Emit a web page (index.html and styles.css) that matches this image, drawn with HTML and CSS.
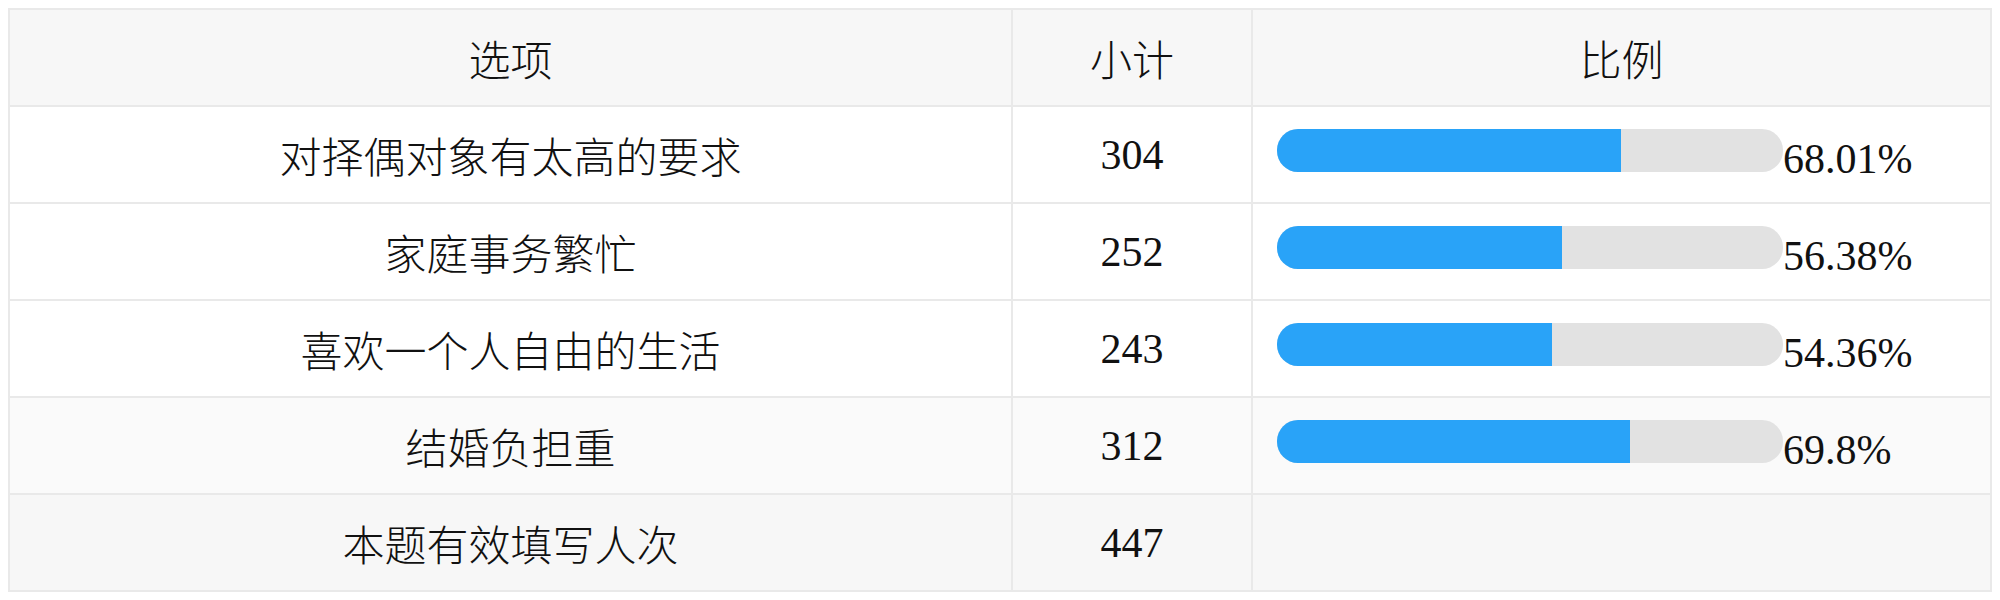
FILE: index.html
```html
<!DOCTYPE html>
<html lang="zh-CN">
<head>
<meta charset="utf-8">
<title>统计表</title>
<link rel="stylesheet" href="styles.css">
</head>
<body>
<table class="stats">
  <colgroup>
    <col class="col-option">
    <col class="col-count">
    <col class="col-ratio">
  </colgroup>
  <thead>
    <tr class="head-row">
      <th>选项</th>
      <th>小计</th>
      <th>比例</th>
    </tr>
  </thead>
  <tbody>
    <tr>
      <td>对择偶对象有太高的要求</td>
      <td>304</td>
      <td class="ratio-cell"><div class="ratio"><div class="bar"><div class="fill" style="width:68.01%"></div></div><span class="pct">68.01%</span></div></td>
    </tr>
    <tr>
      <td>家庭事务繁忙</td>
      <td>252</td>
      <td class="ratio-cell"><div class="ratio"><div class="bar"><div class="fill" style="width:56.38%"></div></div><span class="pct">56.38%</span></div></td>
    </tr>
    <tr>
      <td>喜欢一个人自由的生活</td>
      <td>243</td>
      <td class="ratio-cell"><div class="ratio"><div class="bar"><div class="fill" style="width:54.36%"></div></div><span class="pct">54.36%</span></div></td>
    </tr>
    <tr class="hover-row">
      <td>结婚负担重</td>
      <td>312</td>
      <td class="ratio-cell"><div class="ratio"><div class="bar"><div class="fill" style="width:69.8%"></div></div><span class="pct">69.8%</span></div></td>
    </tr>
    <tr class="total-row">
      <td>本题有效填写人次</td>
      <td>447</td>
      <td></td>
    </tr>
  </tbody>
</table>
</body>
</html>
```

FILE: styles.css
```css
html, body {
  background: #ffffff;
}

body {
  margin: 8px;
  font-family: "Liberation Serif", "Noto Sans CJK SC", serif;
  color: #111111;
}

.stats {
  width: 100%;
  border-collapse: collapse;
  table-layout: fixed;
  font-size: 42px;
  font-weight: 300;
  border: 2px solid #ebebeb;
}

.col-option { width: 1003px; }
.col-count { width: 240px; }

.stats th,
.stats td {
  height: 95px;
  padding: 0;
  border: 2px solid #e9e9e9;
  text-align: center;
  vertical-align: middle;
  font-weight: 300;
}

.head-row th {
  background: #f7f7f7;
}

.hover-row td {
  background: #fafafa;
}

.total-row td {
  background: #f7f7f7;
}

.stats td.ratio-cell {
  text-align: left;
  padding-left: 24px;
}

.ratio {
  display: flex;
  align-items: flex-start;
}

.bar {
  flex: none;
  width: 506px;
  height: 43px;
  margin-top: 3px;
  border-radius: 21px;
  background: #e2e2e2;
  overflow: hidden;
}

.fill {
  height: 100%;
  background: #29a3f8;
}

.pct {
  margin-top: 9px;
  line-height: 48px;
  white-space: nowrap;
  font-family: "Liberation Serif", serif;
}
```
